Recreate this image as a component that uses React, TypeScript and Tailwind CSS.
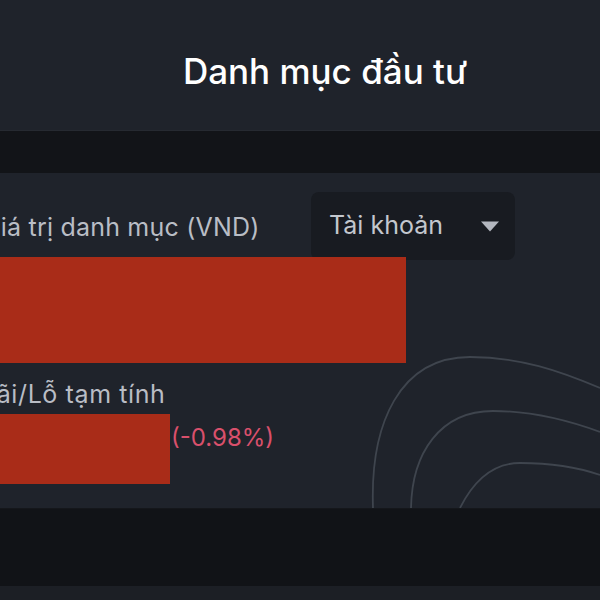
import React from "react";

const Contours: React.FC = () => (
  <svg
    className="absolute inset-0 pointer-events-none"
    width="600"
    height="335"
    viewBox="0 0 600 335"
    fill="none"
  >
    <path d="M373 335 C370 250 400 184 470 184 C520 184 560 198 600 215" stroke="#3f454e" strokeWidth="1.8" />
    <path d="M411 335 C412 280 440 238 493 238 C535 238 570 248 600 259" stroke="#3f454e" strokeWidth="1.8" />
    <path d="M460 335 C475 305 495 290 520 290 C555 290 580 295 600 302" stroke="#3f454e" strokeWidth="1.8" />
  </svg>
);

export default function App() {
  return (
    <div className="w-[600px] h-[600px] overflow-hidden bg-[#1c1f25] font-['Inter',sans-serif]">
      {/* Header */}
      <header className="h-[130px] bg-[#1f232b] flex items-center justify-center pl-[50px] pt-[12px]">
        <h1 className="text-[35px] font-medium text-white">Danh mục đầu tư</h1>
      </header>

      {/* Divider */}
      <div className="h-[43px] bg-[#121418] border-t border-[#262a31]" />

      {/* Portfolio */}
      <section className="relative h-[335px] bg-[#1f232b] pt-[19px]">
        <Contours />
        <div className="relative -ml-[18px]">
          <div className="flex items-center">
            <p className="w-[329px] text-[25px] leading-[30px] tracking-[0.2px] text-[#b9bdc5] pt-[2px]">Giá trị danh mục (VND)</p>
            <button className="w-[204px] h-[68px] rounded-lg bg-[#181b21] flex items-center justify-between pl-[18px] pr-[15px]">
              <span className="text-[25px] text-[#c3c7ce]">Tài khoản</span>
              <svg width="20" height="11" viewBox="0 0 20 11">
                <path d="M1 0.5 H19 L10 10.5 Z" fill="#b3b7bf" />
              </svg>
            </button>
          </div>
          <div className="relative -mt-[3px] w-[424px] h-[106px] bg-[#a92c18]" />

          <p className="mt-[15px] text-[25px] leading-[32px] tracking-[0.6px] text-[#b9bdc5]">Lãi/Lỗ tạm tính</p>
          <div className="mt-[4px] flex items-start">
            <div className="w-[188px] h-[70px] bg-[#a92c18]" />
            <span className="ml-[1px] mt-[9px] text-[24px] leading-[30px] text-[#d9506b]">(-0.98%)</span>
          </div>
        </div>
      </section>

      {/* Bottom band */}
      <div className="h-[78px] bg-[#111317] border-t border-[#15171b]" />
    </div>
  );
}
